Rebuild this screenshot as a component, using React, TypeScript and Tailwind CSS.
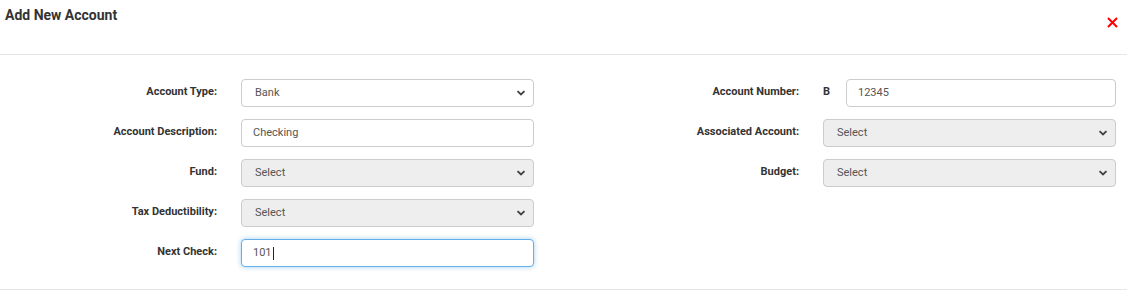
import React from 'react'

const font = { fontFamily: 'Roboto, "Liberation Sans", sans-serif' }

function Chevron() {
  return (
    <svg width='10' height='7' viewBox='0 0 10 7' className='absolute right-[7px] top-1/2 -translate-y-1/2'>
      <path d='M1.5 1.6 L5 5 L8.5 1.6' fill='none' stroke='#444' strokeWidth='1.9' />
    </svg>
  )
}

function SelectBox({ value, filled }: { value: string; filled?: boolean }) {
  return (
    <div
      className={`relative h-[28px] w-full rounded-[4px] border border-[#ccc] flex items-center pl-[13px] text-[11px] text-[#555] ${
        filled ? 'bg-white' : 'bg-[#eee]'
      }`}
    >
      {value}
      <Chevron />
    </div>
  )
}

function TextBox({ value, focused }: { value: string; focused?: boolean }) {
  return (
    <div
      className={`h-[28px] w-full rounded-[4px] border bg-white flex items-center pl-[11px] text-[11px] text-[#555] ${
        focused ? 'border-[#66afe9] shadow-[0_0_5px_rgba(102,175,233,0.6)]' : 'border-[#ccc]'
      }`}
    >
      {value}
      {focused && <span className='inline-block w-px h-[13px] bg-[#222] ml-px' />}
    </div>
  )
}

function Row({ label, children }: { label: string; children: React.ReactNode }) {
  return (
    <div className='flex items-center h-[28px]'>
      <div className='w-[217px] text-right text-[11px] font-bold text-[#333] -mt-[2px]'>{label}</div>
      <div className='ml-[24px] w-[293px]'>{children}</div>
    </div>
  )
}

export default function App() {
  return (
    <div className='w-[1127px] h-[303px] bg-white' style={font}>
      <div className='h-[55px] border-b border-[#e5e5e5] flex justify-between'>
        <h3 className='pl-[5px] pt-[5px] text-[14px]/[20px] font-bold text-[#333]'>Add New Account</h3>
        <svg width='11' height='11' viewBox='0 0 11 11' className='mt-[17px] mr-[9px]'>
          <path d='M1 1 L10 10 M10 1 L1 10' stroke='#f00' strokeWidth='2' />
        </svg>
      </div>

      <div className='flex pt-[24px] pb-[22px] border-b border-[#e5e5e5] gap-[48px]'>
        <div className='flex flex-col gap-[12px]'>
          <Row label='Account Type:'>
            <SelectBox value='Bank' filled />
          </Row>
          <Row label='Account Description:'>
            <TextBox value='Checking' />
          </Row>
          <Row label='Fund:'>
            <SelectBox value='Select' />
          </Row>
          <Row label='Tax Deductibility:'>
            <SelectBox value='Select' />
          </Row>
          <Row label='Next Check:'>
            <TextBox value='101' focused />
          </Row>
        </div>
        <div className='flex flex-col gap-[12px]'>
          <Row label='Account Number:'>
            <div className='flex items-center'>
              <span className='w-[23px] text-[11px] font-bold text-[#333] -mt-[2px]'>B</span>
              <div className='flex-1'>
                <TextBox value='12345' />
              </div>
            </div>
          </Row>
          <Row label='Associated Account:'>
            <SelectBox value='Select' />
          </Row>
          <Row label='Budget:'>
            <SelectBox value='Select' />
          </Row>
        </div>
      </div>
    </div>
  )
}
